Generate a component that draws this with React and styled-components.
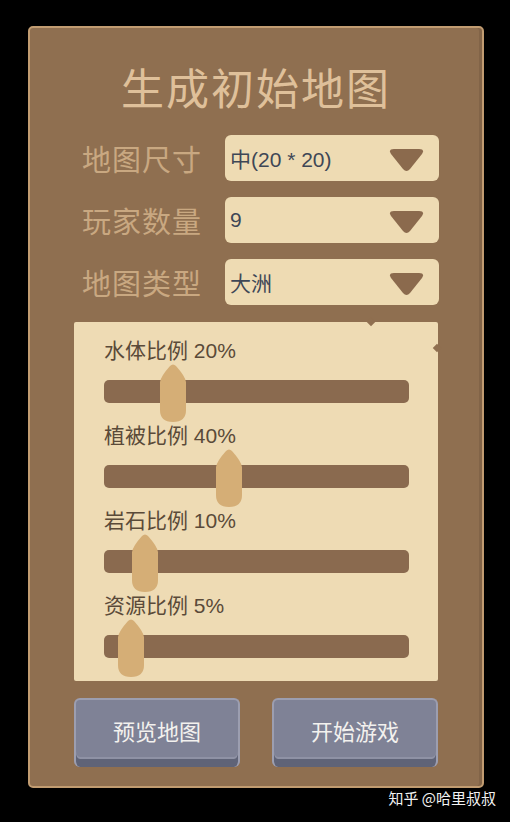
import React from 'react';
import styled, { createGlobalStyle } from 'styled-components';

const GlobalStyle = createGlobalStyle`
  html, body {
    margin: 0;
    padding: 0;
    background: #000;
  }
  body {
    font-family: "Liberation Sans", "Noto Sans CJK SC", sans-serif;
  }
`;

const options = [
  { label: '地图尺寸', value: '中(20 * 20)' },
  { label: '玩家数量', value: '9' },
  { label: '地图类型', value: '大洲' },
];

const ratios = [
  { label: '水体比例', pct: 20 },
  { label: '植被比例', pct: 40 },
  { label: '岩石比例', pct: 10 },
  { label: '资源比例', pct: 5 },
];

const TRACK_W = 305;
const THUMB_W = 26;

const App = () => {
  return (
    <>
      <GlobalStyle />
      <Page>
        <Panel>
          <Title>生成初始地图</Title>

          <Rows>
            {options.map((o) => (
              <Row key={o.label}>
                <RowLabel>{o.label}</RowLabel>
                <Select>
                  <SelectText>{o.value}</SelectText>
                  <Arrow width="35" height="23" viewBox="0 0 35 23">
                    <path d="M5 0 H30 Q36 0 33 5 L21 20 Q17.5 24 14 20 L2 5 Q-1 0 5 0 Z" fill="#8b6a4d" />
                  </Arrow>
                </Select>
              </Row>
            ))}
          </Rows>

          <Parchment>
            <Notch $top="0" $right="64px" />
            <Notch $top="26px" $right="-2px" />
            {ratios.map((r) => (
              <Ratio key={r.label}>
                <RatioLabel>{r.label} {r.pct}%</RatioLabel>
                <Track>
                  <Thumb
                    width="26"
                    height="58"
                    viewBox="0 0 26 58"
                    style={{ left: (r.pct / 100) * (TRACK_W - THUMB_W) }}
                  >
                    <path
                      d="M0 18 Q1 12 10 2 Q13 -1 16 2 Q25 12 26 18 V46 Q26 58 13 58 Q0 58 0 46 Z"
                      fill="#d5ae76"
                    />
                  </Thumb>
                </Track>
              </Ratio>
            ))}
          </Parchment>

          <Buttons>
            <StoneButton>预览地图</StoneButton>
            <StoneButton>开始游戏</StoneButton>
          </Buttons>
        </Panel>
        <Watermark>知乎 @哈里叔叔</Watermark>
      </Page>
    </>
  );
};

export default App;

const Page = styled.div`
  width: 510px;
  height: 822px;
  padding: 26px 0 0 28px;
  box-sizing: border-box;
  overflow: hidden;
`;

const Panel = styled.div`
  width: 456px;
  height: 762px;
  box-sizing: border-box;
  background: #8f6f50;
  border: 2px solid #c19c71;
  border-radius: 5px;
  padding: 0 44px;
  display: flex;
  flex-direction: column;
  box-shadow: inset -3px 0 0 #826448;
`;

const Title = styled.h1`
  margin: 28px 0 0;
  height: 60px;
  line-height: 60px;
  text-align: center;
  font-size: 43px;
  font-weight: 400;
  color: #dfc09a;
  font-family: "Noto Sans CJK SC", sans-serif;
  letter-spacing: 2px;
`;

const Rows = styled.div`
  margin-top: 19px;
  display: flex;
  flex-direction: column;
  gap: 16px;
`;

const Row = styled.div`
  display: flex;
  align-items: center;
  justify-content: space-between;
  height: 46px;
`;

const RowLabel = styled.span`
  padding-left: 8px;
  font-size: 29px;
  color: #c9a881;
  font-family: "Noto Sans CJK SC", sans-serif;
  letter-spacing: 1px;
`;

const Select = styled.div`
  width: 214px;
  height: 46px;
  margin-right: -1px;
  box-sizing: border-box;
  background: #eedbb3;
  border-radius: 6px;
  display: flex;
  align-items: center;
  justify-content: space-between;
  padding: 0 15px 0 5px;
`;

const SelectText = styled.span`
  font-size: 21px;
  color: #3e4756;
  font-family: "Liberation Sans", "Noto Sans CJK SC", sans-serif;
`;

const Arrow = styled.svg`
  display: block;
  margin-top: 4px;
`;

const Parchment = styled.div`
  position: relative;
  margin-top: 17px;
  height: 359px;
  box-sizing: border-box;
  background: #eedbb4;
  border-radius: 2px;
  padding: 17px 29px 0 30px;
  display: flex;
  flex-direction: column;
  gap: 21px;
`;

const Notch = styled.span`
  position: absolute;
  top: ${(p) => p.$top};
  right: ${(p) => p.$right};
  width: 6px;
  height: 6px;
  background: #8f6f50;
  transform: translateY(-3px) rotate(45deg);
`;

const Ratio = styled.div`
  display: flex;
  flex-direction: column;
  gap: 17px;
`;

const RatioLabel = styled.span`
  height: 24px;
  line-height: 24px;
  font-size: 21px;
  color: #5a4a39;
  font-family: "Liberation Sans", "Noto Sans CJK SC", sans-serif;
`;

const Track = styled.div`
  position: relative;
  width: ${TRACK_W}px;
  height: 23px;
  background: #8a6a4f;
  border-radius: 5px;
`;

const Thumb = styled.svg`
  position: absolute;
  top: -16px;
  display: block;
`;

const Buttons = styled.div`
  margin-top: 17px;
  display: flex;
  justify-content: space-between;
`;

const StoneButton = styled.button`
  width: 166px;
  height: 69px;
  box-sizing: border-box;
  border: 2px solid #9c9eb0;
  border-bottom: 0;
  border-radius: 6px;
  background: #7f8296;
  box-shadow: inset 0 -8px 0 #5f6377, inset 0 -10px 0 #8f92a5;
  color: #f3f1ee;
  font-size: 22px;
  font-family: "Noto Sans CJK SC", sans-serif;
  padding: 0 0 8px;
  cursor: pointer;
`;

const Watermark = styled.div`
  width: 468px;
  text-align: right;
  line-height: 20px;
  font-size: 15px;
  color: #f2f2f2;
  font-family: "Noto Sans CJK SC", sans-serif;
`;
